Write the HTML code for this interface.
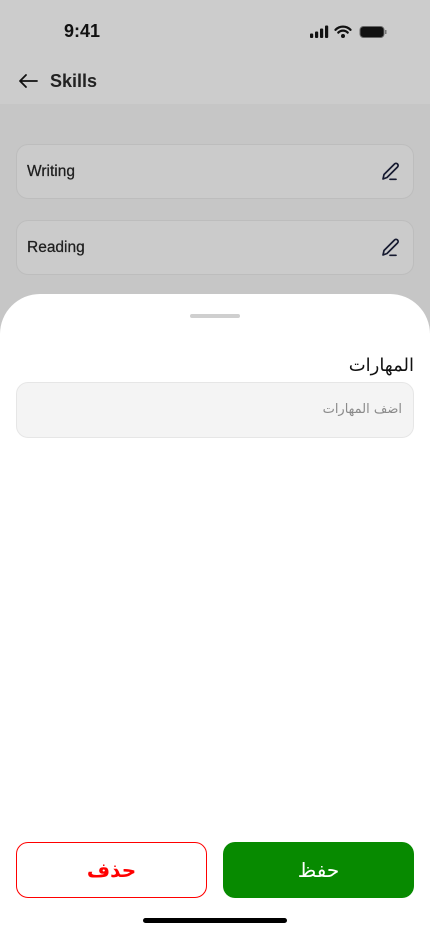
<!DOCTYPE html>
<html><head><meta charset="utf-8"><style>
*{margin:0;padding:0;box-sizing:border-box}
body{width:430px;height:932px;position:relative;overflow:hidden;background:#c6c6c6;font-family:"Liberation Sans","DejaVu Sans",sans-serif}
.hdr{position:absolute;left:0;top:0;width:430px;height:104px;background:#cccccc}
.time{position:absolute;left:64px;top:21px;font-size:18px;font-weight:bold;color:#111}
.title{position:absolute;left:50px;top:71px;font-size:18px;font-weight:bold;color:#222}
.card{position:absolute;left:16px;width:398px;height:55px;border:1px solid #bdbdbd;border-radius:12px;background:#cbcbcb}
.card span{position:absolute;left:10px;top:18px;font-size:15.5px;color:#1e1e1e;-webkit-text-stroke:0.25px #1e1e1e}
.card svg{position:absolute;right:12px;top:16px}
.sheet{position:absolute;left:0;top:294px;width:430px;height:638px;background:#fff;border-radius:40px 40px 0 0}
.handle{position:absolute;left:190px;top:314px;width:50px;height:4px;border-radius:2px;background:#cfcfcf}
.lbl{position:absolute;right:16px;top:355px;font-size:18px;color:#111;font-family:"DejaVu Sans",sans-serif}
.inp{position:absolute;left:16px;top:382px;width:398px;height:56px;border:1px solid #e6e6e6;border-radius:12px;background:#f4f4f4}
.inp span{position:absolute;right:11px;top:19px;font-size:13px;color:#8a8a8a;font-family:"DejaVu Sans",sans-serif}
.btn{position:absolute;top:842px;height:56px;border-radius:12px;display:flex;align-items:center;justify-content:center;font-size:20px;font-family:"DejaVu Sans",sans-serif}
.del{left:16px;width:191px;border:1px solid #f00;color:#f00;background:#fff;font-weight:bold}
.save{left:223px;width:191px;background:#078a00;color:#fff}
.home{position:absolute;left:143px;top:918px;width:144px;height:5px;border-radius:3px;background:#000}
</style></head><body>
<div class="hdr"></div>
<div class="time">9:41</div>
<svg style="position:absolute;left:309px;top:25px" width="80" height="14" viewBox="0 0 80 14">
<rect x="1" y="8.5" width="3.2" height="4.5" rx="1" fill="#111"/><rect x="6" y="6.5" width="3.2" height="6.5" rx="1" fill="#111"/><rect x="11" y="3.5" width="3.2" height="9.5" rx="1" fill="#111"/><rect x="16" y="0.5" width="3.2" height="12.5" rx="1" fill="#111"/>
<path d="M26.5 4.8a10.5 10.5 0 0 1 15 0M29.3 7.6a6.5 6.5 0 0 1 9.4 0" stroke="#111" stroke-width="2.3" fill="none" stroke-linecap="round"/><circle cx="34" cy="11" r="2" fill="#111"/>
<rect x="51" y="1.5" width="24" height="11" rx="3.5" fill="#111" stroke="#666" stroke-width="1"/><rect x="76" y="5" width="1.5" height="4" fill="#777"/>
</svg>
<svg style="position:absolute;left:18px;top:73px" width="20" height="16" viewBox="0 0 20 16"><path d="M19 8H2M8 2L2 8l6 6" stroke="#111" stroke-width="1.8" fill="none" stroke-linecap="round" stroke-linejoin="round"/></svg>
<div class="title">Skills</div>
<div class="card" style="top:144px"><span>Writing</span><svg width="20" height="20" viewBox="0 0 20 20"><path d="M2 18l1-4.5L13.5 3a2 2 0 0 1 3 3L6 16.5z" stroke="#161a30" stroke-width="1.7" fill="none" stroke-linejoin="round"/><path d="M9 18.3h6" stroke="#161a30" stroke-width="1.7" stroke-linecap="round"/></svg></div>
<div class="card" style="top:220px"><span>Reading</span><svg width="20" height="20" viewBox="0 0 20 20"><path d="M2 18l1-4.5L13.5 3a2 2 0 0 1 3 3L6 16.5z" stroke="#161a30" stroke-width="1.7" fill="none" stroke-linejoin="round"/><path d="M9 18.3h6" stroke="#161a30" stroke-width="1.7" stroke-linecap="round"/></svg></div>
<div class="sheet"></div>
<div class="handle"></div>
<div class="lbl" dir="rtl">المهارات</div>
<div class="inp"><span dir="rtl">اضف المهارات</span></div>
<div class="btn del" dir="rtl">حذف</div>
<div class="btn save" dir="rtl">حفظ</div>
<div class="home"></div>
</body></html>
